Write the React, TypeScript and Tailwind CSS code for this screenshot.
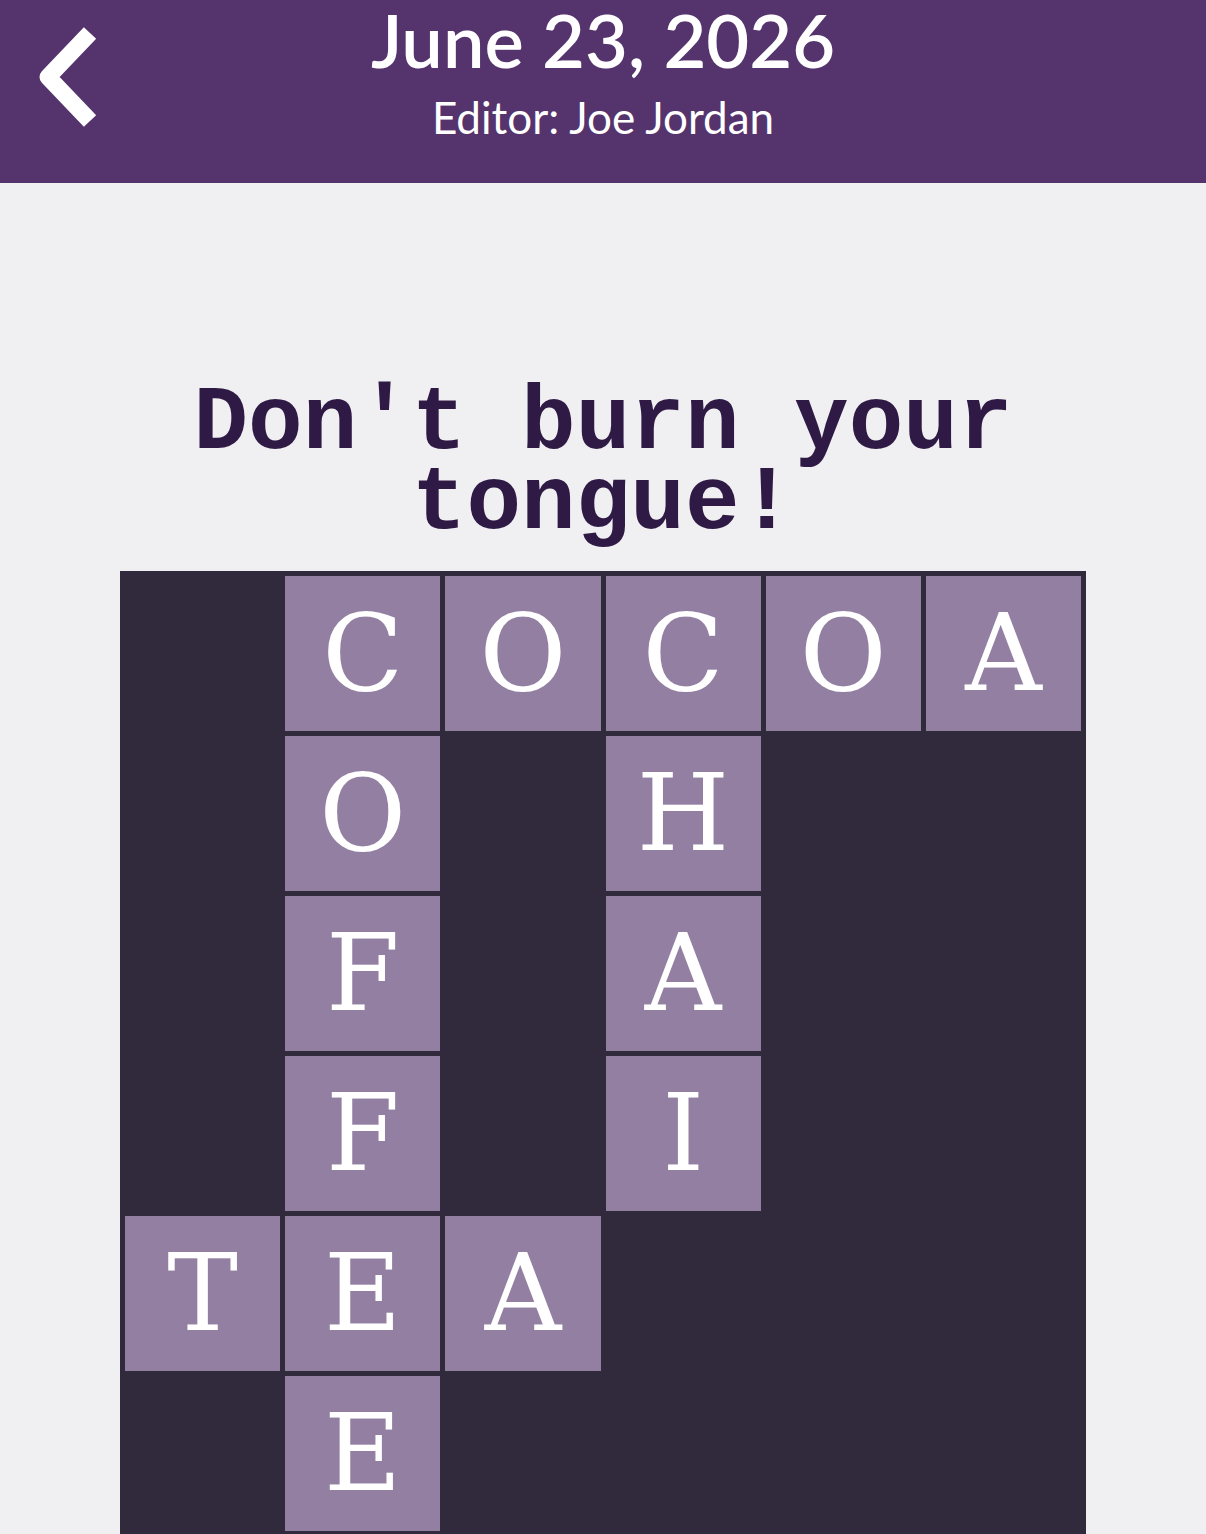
type Cell = string | null

// puzzle solution, row by row ('.' = blocked square)
const ROWS = ['.COCOA', '.O.H..', '.F.A..', '.F.I..', 'TEA...', '.E....', '......']

const GRID: Cell[][] = ROWS.map((r) => r.split('').map((ch) => (ch === '.' ? null : ch)))

export default function App() {
  return (
    <div className="flex h-[1534px] flex-col overflow-hidden bg-[#f0f0f2]">
      <header className="grid h-[183px] shrink-0 grid-cols-[1fr_auto_1fr] bg-[#55346d] text-white">
        <div className="flex items-start pl-[22px] pt-[14px]">
          <button type="button" aria-label="Back" className="flex h-[126px] w-[90px] items-center justify-center">
            <BackChevron />
          </button>
        </div>
        <div className="flex flex-col items-center" style={{ fontFamily: 'Lato, "Open Sans", sans-serif' }}>
          <h1 className="mt-[12px] text-[74px] font-semibold leading-[56px]">June 23, 2026</h1>
          <p className="mt-[21px] text-[44px] leading-[56px]">Editor: Joe Jordan</p>
        </div>
        <div />
      </header>

      <main className="flex flex-1 flex-col items-center pt-[201px]">
        <h2
          className="w-[900px] text-center text-[91px] font-bold leading-[80px] text-[#2f1a45]"
          style={{ fontFamily: '"Courier New", "Liberation Mono", monospace' }}
        >
          Don't burn your tongue!
        </h2>

        <div className="mt-[27px] grid w-[966px] shrink-0 grid-cols-6 gap-[5px] bg-[#302a3c] p-[5px]">
          {GRID.flat().map((ch, i) => (
            <div
              key={i}
              className={[
                'flex h-[155px] items-center justify-center',
                ch ? 'bg-[#937fa2]' : '',
              ].join(' ')}
            >
              {ch && (
                <span
                  className="text-[106px] leading-none text-white"
                  style={{ fontFamily: '"DejaVu Serif", serif' }}
                >
                  {ch}
                </span>
              )}
            </div>
          ))}
        </div>
      </main>
    </div>
  )
}

function BackChevron() {
  return (
    <svg viewBox="0 0 70 100" className="h-[100px] w-[70px]" fill="none">
      <path d="M58 6 L16 50 L58 94" stroke="white" strokeWidth="17" strokeLinejoin="round" />
    </svg>
  )
}
